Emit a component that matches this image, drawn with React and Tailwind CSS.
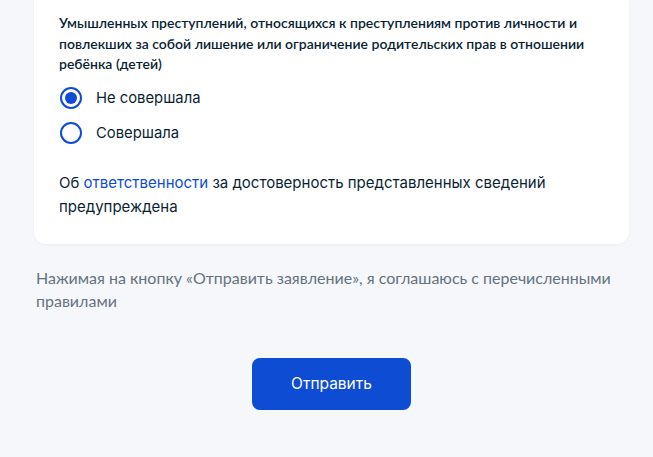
import React, { useState } from 'react';

const options = [
  { id: 'no', label: 'Не совершала' },
  { id: 'yes', label: 'Совершала' },
];

const Radio = ({ checked, label, onClick }) => (
  <button type="button" onClick={onClick} className="flex items-center h-[35px] text-left">
    <span className="w-[22px] h-[22px] rounded-full border-2 border-[#0d4cd3] flex items-center justify-center shrink-0">
      {checked && <span className="w-[12px] h-[12px] rounded-full bg-[#0d4cd3]" />}
    </span>
    <span className="ml-[14px] text-[14.8px] text-[#0b1f33] font-['Inter',sans-serif]">{label}</span>
  </button>
);

const App = () => {
  const [value, setValue] = useState('no');

  return (
    <div className="min-h-screen bg-[#f5f7fa] font-['Lato',sans-serif] pl-[34px] pr-[24px]">
      {/* Card */}
      <div className="bg-white rounded-b-xl shadow-[0_1px_3px_rgba(0,0,0,0.04)] pt-[13px] pb-[25px] pl-[25px] pr-[20px]">
        <p className="text-[14px] leading-[20.5px] font-semibold text-[#0b1f33]">
          Умышленных преступлений, относящихся к преступлениям против личности и повлекших за собой лишение или ограничение родительских прав в отношении ребёнка (детей)
        </p>
        <div className="mt-[6px] flex flex-col ml-[1px]">
          {options.map((o) => (
            <Radio key={o.id} label={o.label} checked={value === o.id} onClick={() => setValue(o.id)} />
          ))}
        </div>
        <p className="mt-[20px] text-[15px] leading-[24px] text-[#0b1f33] font-['Inter',sans-serif]">
          Об <a href="#" className="text-[#0d4cd3]">ответственности</a> за достоверность представленных сведений предупреждена
        </p>
      </div>

      {/* Agreement note */}
      <p className="mt-[22px] pl-[2px] text-[16px] leading-[23.5px] text-[#66727f]">
        Нажимая на кнопку «Отправить заявление», я соглашаюсь с перечисленными правилами
      </p>

      {/* Submit */}
      <div className="flex justify-center mt-[45px]">
        <button className="w-[159px] h-[52px] rounded-lg bg-[#0d4cd3] text-white text-[15.5px] font-['Inter',sans-serif]">
          Отправить
        </button>
      </div>
    </div>
  );
};

export default App;
